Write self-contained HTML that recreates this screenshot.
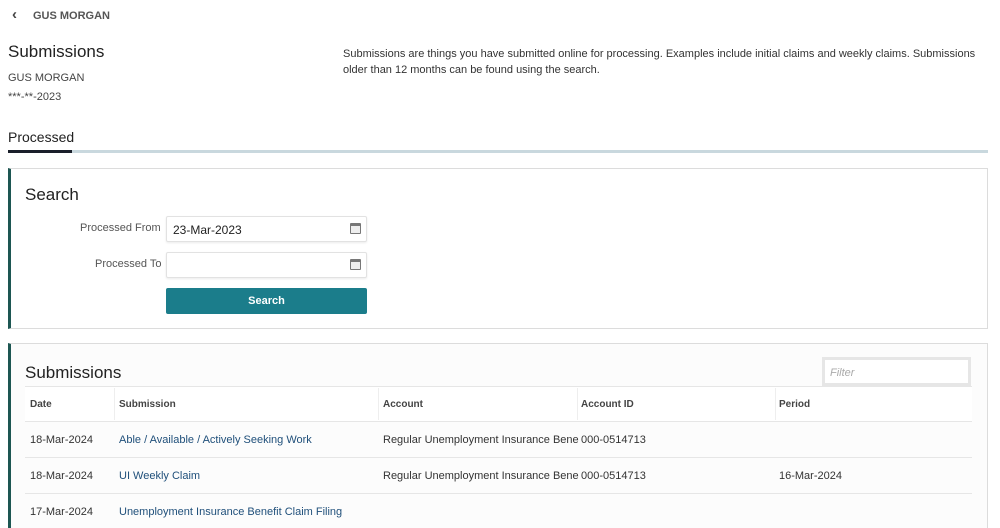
<!DOCTYPE html>
<html><head><style>
*{box-sizing:border-box;margin:0;padding:0}
html,body{width:1000px;height:528px;overflow:hidden}
body{background:#fff;font-family:"Liberation Sans",sans-serif;color:#333;position:relative}
.a{position:absolute;white-space:nowrap}
.card{position:absolute;left:8px;width:980px;border:1px solid #dcdcdc;border-left:3px solid #1d5652;background:#fff}
.inp{position:absolute;left:166px;width:201px;height:26px;border:1px solid #e2e2e2;border-radius:2px;background:#fff;box-shadow:0 1px 2px rgba(0,0,0,.08)}
.cal{position:absolute;right:5px;top:6px;width:11px;height:11px;border:1px solid #777;border-top-width:3px;border-radius:1px;background:#eee}
.th{position:absolute;top:399px;font-size:10px;font-weight:bold;color:#444}
.td{position:absolute;font-size:11px;color:#333}
.lk{color:#1f4f7a}
.vl{position:absolute;top:388px;width:1px;height:32px;background:#eee}
.hl{position:absolute;left:25px;width:947px;height:1px;background:#e6e6e6}
</style></head><body>
<div class="a" style="left:12px;top:6px;font-size:15px;font-weight:bold;color:#444">&#8249;</div>
<div class="a" style="left:33px;top:10px;font-size:11px;font-weight:bold;color:#555">GUS MORGAN</div>
<div class="a" style="left:8px;top:42px;font-size:17px;color:#222">Submissions</div>
<div class="a" style="left:8px;top:72px;font-size:11px;color:#444">GUS MORGAN</div>
<div class="a" style="left:8px;top:91px;font-size:11px;color:#444">***-**-2023</div>
<div class="a" style="left:343px;top:46px;font-size:11px;line-height:16px;color:#333;white-space:normal;width:645px">Submissions are things you have submitted online for processing. Examples include initial claims and weekly claims. Submissions older than 12 months can be found using the search.</div>
<div class="a" style="left:8px;top:129px;font-size:14px;color:#222">Processed</div>
<div class="a" style="left:8px;top:150px;width:980px;height:3px;background:#c9d8de"></div>
<div class="a" style="left:8px;top:150px;width:64px;height:3px;background:#1a1f2a"></div>

<div class="card" style="top:168px;height:161px"></div>
<div class="a" style="left:25px;top:185px;font-size:17px;color:#222">Search</div>
<div class="a" style="left:80px;top:222px;font-size:11px;color:#555">Processed From</div>
<div class="inp" style="top:216px"><span class="a" style="left:6px;top:6px;font-size:12px;color:#222">23-Mar-2023</span><div class="cal"></div></div>
<div class="a" style="left:95px;top:258px;font-size:11px;color:#555">Processed To</div>
<div class="inp" style="top:252px"><div class="cal"></div></div>
<div class="a" style="left:166px;top:288px;width:201px;height:26px;background:#1b7d8b;border-radius:2px;color:#fff;font-size:11px;font-weight:bold;text-align:center;line-height:26px">Search</div>

<div class="card" style="top:343px;height:200px;background:#fcfcfc"></div>
<div class="a" style="left:25px;top:363px;font-size:17px;color:#222">Submissions</div>
<div class="a" style="left:822px;top:357px;width:149px;height:29px;border:3px solid #e6e6e6;background:#fff"><span class="a" style="left:5px;top:7px;font-size:11px;font-style:italic;color:#aaa">Filter</span></div>
<div class="hl" style="top:386px"></div>
<div class="a" style="left:25px;top:387px;width:947px;height:34px;background:#fff"></div>
<div class="vl" style="left:114px"></div><div class="vl" style="left:378px"></div><div class="vl" style="left:577px"></div><div class="vl" style="left:775px"></div>
<div class="th" style="left:30px">Date</div><div class="th" style="left:119px">Submission</div><div class="th" style="left:383px">Account</div><div class="th" style="left:581px">Account ID</div><div class="th" style="left:779px">Period</div>
<div class="hl" style="top:421px"></div><div class="hl" style="top:457px"></div><div class="hl" style="top:493px"></div>
<div class="td" style="left:30px;top:434px">18-Mar-2024</div><div class="td lk" style="left:119px;top:434px">Able / Available / Actively Seeking Work</div><div class="td" style="left:383px;top:434px">Regular Unemployment Insurance Bene</div><div class="td" style="left:581px;top:434px">000-0514713</div>
<div class="td" style="left:30px;top:470px">18-Mar-2024</div><div class="td lk" style="left:119px;top:470px">UI Weekly Claim</div><div class="td" style="left:383px;top:470px">Regular Unemployment Insurance Bene</div><div class="td" style="left:581px;top:470px">000-0514713</div><div class="td" style="left:779px;top:470px">16-Mar-2024</div>
<div class="td" style="left:30px;top:506px">17-Mar-2024</div><div class="td lk" style="left:119px;top:506px">Unemployment Insurance Benefit Claim Filing</div>
</body></html>
